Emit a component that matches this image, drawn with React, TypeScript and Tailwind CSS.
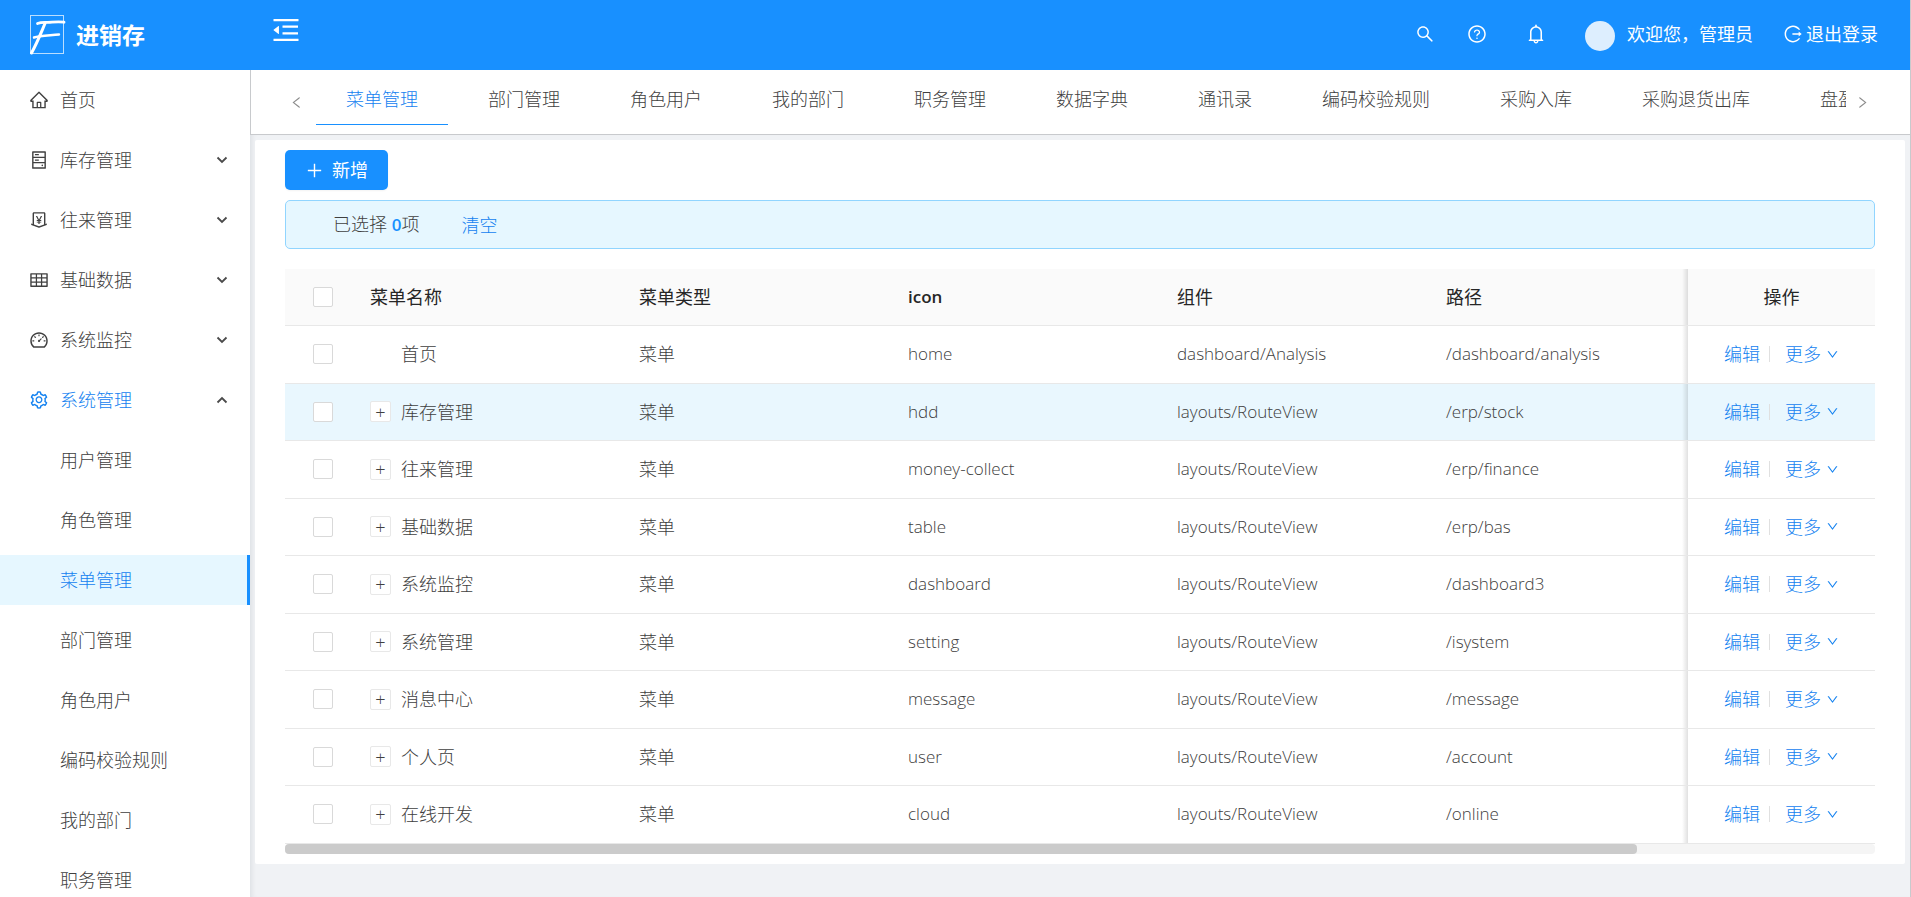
import { useState } from 'react';
import type { IconType } from 'react-icons';
import {
  AiOutlineBell,
  AiOutlineDashboard,
  AiOutlineDown,
  AiOutlineHdd,
  AiOutlineHome,
  AiOutlineLeft,
  AiOutlineLogout,
  AiOutlineMenuFold,
  AiOutlineMoneyCollect,
  AiOutlinePlus,
  AiOutlineQuestionCircle,
  AiOutlineRight,
  AiOutlineSearch,
  AiOutlineSetting,
  AiOutlineTable,
} from 'react-icons/ai';
import clsx from 'clsx';

interface MenuGroup {
  title: string;
  icon: IconType;
  expandable?: boolean;
  open?: boolean;
  children?: string[];
}

interface MenuRow {
  name: string;
  icon: string;
  component: string;
  path: string;
  leaf?: boolean;
}

const menuGroups: MenuGroup[] = [
  { title: '首页', icon: AiOutlineHome },
  { title: '库存管理', icon: AiOutlineHdd, expandable: true },
  { title: '往来管理', icon: AiOutlineMoneyCollect, expandable: true },
  { title: '基础数据', icon: AiOutlineTable, expandable: true },
  { title: '系统监控', icon: AiOutlineDashboard, expandable: true },
  {
    title: '系统管理',
    icon: AiOutlineSetting,
    expandable: true,
    open: true,
    children: ['用户管理', '角色管理', '菜单管理', '部门管理', '角色用户', '编码校验规则', '我的部门', '职务管理'],
  },
];

const tabs = [
  '菜单管理',
  '部门管理',
  '角色用户',
  '我的部门',
  '职务管理',
  '数据字典',
  '通讯录',
  '编码校验规则',
  '采购入库',
  '采购退货出库',
  '盘盈入库',
];

const rows: MenuRow[] = [
  { name: '首页', icon: 'home', component: 'dashboard/Analysis', path: '/dashboard/analysis', leaf: true },
  { name: '库存管理', icon: 'hdd', component: 'layouts/RouteView', path: '/erp/stock' },
  { name: '往来管理', icon: 'money-collect', component: 'layouts/RouteView', path: '/erp/finance' },
  { name: '基础数据', icon: 'table', component: 'layouts/RouteView', path: '/erp/bas' },
  { name: '系统监控', icon: 'dashboard', component: 'layouts/RouteView', path: '/dashboard3' },
  { name: '系统管理', icon: 'setting', component: 'layouts/RouteView', path: '/isystem' },
  { name: '消息中心', icon: 'message', component: 'layouts/RouteView', path: '/message' },
  { name: '个人页', icon: 'user', component: 'layouts/RouteView', path: '/account' },
  { name: '在线开发', icon: 'cloud', component: 'layouts/RouteView', path: '/online' },
];

// left-hand shadow of the fixed column
const fixedShadow =
  'relative before:absolute before:inset-y-0 before:-left-1.5 before:w-1.5 before:bg-linear-to-l before:from-black/12 before:to-transparent';

function Logo() {
  return (
    <svg width="36" height="40" viewBox="0 0 36 40" fill="none" stroke="white" aria-hidden="true">
      <rect x="0.5" y="0.5" width="33" height="38" strokeOpacity="0.7" />
      <path d="M7.5 8.5 C12 6.5 16 7.8 22 7.2 S30 6.6 34 7.2" strokeWidth="2.8" strokeLinecap="round" />
      <path d="M15 8.5 C10.5 19 7 28 1.5 38" strokeWidth="3" strokeLinecap="round" />
      <path d="M4 22.5 C10 20.5 20 20.5 29 19.5" strokeWidth="2.4" strokeLinecap="round" />
    </svg>
  );
}

function Chevron({ up }: { up?: boolean }) {
  return (
    <svg width="12" height="8" viewBox="0 0 12 8" fill="none" stroke="currentColor" strokeWidth="1.8" aria-hidden="true">
      <path d={up ? 'M1.5 6.5 L6 2 L10.5 6.5' : 'M1.5 1.5 L6 6 L10.5 1.5'} />
    </svg>
  );
}

function TopBar() {
  return (
    <header className="flex h-[70px] shrink-0 items-center bg-[#1890ff] font-normal text-white">
      <div className="flex w-[250px] shrink-0 items-center gap-2.5 pl-[30px]">
        <Logo />
        <h1 className="text-[23px] font-bold">进销存</h1>
      </div>
      <button type="button" aria-label="收起菜单" className="mb-2.5 ml-5 text-[32px]">
        <AiOutlineMenuFold />
      </button>
      <div className="ml-auto flex items-center pr-8 pb-0.5">
        <button type="button" aria-label="搜索" className="px-4 text-[20px]">
          <AiOutlineSearch />
        </button>
        <button type="button" aria-label="帮助" className="pr-5 pl-4 text-[20px]">
          <AiOutlineQuestionCircle />
        </button>
        <button type="button" aria-label="通知" className="pr-[38px] pl-[18px] text-[22px]">
          <AiOutlineBell />
        </button>
        <span className="mt-1 mr-3 size-[30px] rounded-full bg-[#ddeefe]" />
        <span className="mr-[30px]">欢迎您，管理员</span>
        <a href="#logout" className="flex items-center gap-[3px]">
          <AiOutlineLogout className="text-[20px]" />
          退出登录
        </a>
      </div>
    </header>
  );
}

function SideMenu() {
  const [selected, setSelected] = useState('菜单管理');

  return (
    <nav className="flex w-[250px] shrink-0 flex-col gap-2.5 overflow-hidden bg-white pt-[5px]">
      {menuGroups.map((group) => (
        <div key={group.title} className="flex shrink-0 flex-col gap-2.5">
          <button
            type="button"
            className={clsx('flex h-[50px] items-center gap-[11px] pr-[22px] pl-[29px]', group.open && 'text-[#1482f0]')}
          >
            <group.icon className="text-[20px]" />
            {group.title}
            {group.expandable && (
              <span className="ml-auto text-[#4a4a4a]">
                <Chevron up={group.open} />
              </span>
            )}
          </button>
          {group.children?.map((child) => (
            <button
              key={child}
              type="button"
              onClick={() => setSelected(child)}
              className={clsx(
                'h-[50px] border-r-[3px] pl-[60px] text-left',
                child === selected ? 'border-[#1890ff] bg-[#e6f7ff] text-[#1482f0]' : 'border-transparent'
              )}
            >
              {child}
            </button>
          ))}
        </div>
      ))}
    </nav>
  );
}

function PageTabs() {
  const [active, setActive] = useState('菜单管理');

  return (
    <div className="flex h-[65px] shrink-0 items-start border-b border-l border-[#c8cacd] bg-white pr-[31px]">
      <button type="button" aria-label="向左" className="flex h-[64px] w-[65px] items-center justify-end pr-3 text-[15px] text-[#8c8c8c]">
        <AiOutlineLeft />
      </button>
      <div className="flex min-w-0 flex-1 gap-2.5 overflow-hidden">
        {tabs.map((tab) => (
          <button
            key={tab}
            type="button"
            onClick={() => setActive(tab)}
            className={clsx(
              'h-[55px] shrink-0 border-b px-[30px] pt-1',
              tab === active ? 'border-[#1890ff] text-[#1482f0]' : 'border-transparent'
            )}
          >
            {tab}
          </button>
        ))}
      </div>
      <button type="button" aria-label="向右" className="flex h-[64px] w-[33px] items-center justify-center text-[15px] text-[#8c8c8c]">
        <AiOutlineRight />
      </button>
    </div>
  );
}

function Checkbox({ label }: { label: string }) {
  return (
    <input
      type="checkbox"
      aria-label={label}
      className="block size-5 appearance-none rounded-xs border border-[#d9d9d9] bg-white checked:bg-[#1890ff]"
    />
  );
}

function MenuTable() {
  return (
    <div>
      <table className="w-full table-fixed text-left">
        <thead>
          <tr className="h-[56px] border-b border-[#e8e8e8] bg-[#fafafa] text-[#262626]">
            <th className="w-[65px] pl-7">
              <Checkbox label="全选" />
            </th>
            <th className="w-[269px] px-5 font-normal">菜单名称</th>
            <th className="w-[269px] px-5 font-normal">菜单类型</th>
            <th className="w-[269px] px-5 text-[17px] font-semibold">icon</th>
            <th className="w-[269px] px-5 font-normal">组件</th>
            <th className="px-5 font-normal">路径</th>
            <th className={clsx('w-[187px] text-center font-normal', fixedShadow)}>操作</th>
          </tr>
        </thead>
        <tbody>
          {rows.map((row, index) => (
            <tr
              key={row.name}
              className={clsx('border-b border-[#e8e8e8] odd:h-[58px] even:h-[57px]', index === 1 && 'bg-[#e9f7fe]')}
            >
              <td className="pl-7">
                <Checkbox label={row.name} />
              </td>
              <td className="px-5">
                <div className="flex items-center gap-2.5">
                  {row.leaf ? (
                    <span className="w-[21px]" />
                  ) : (
                    <button
                      type="button"
                      aria-label="展开"
                      className="flex size-[21px] items-center justify-center rounded-xs border border-[#e8e8e8] bg-white leading-none"
                    >
                      +
                    </button>
                  )}
                  {row.name}
                </div>
              </td>
              <td className="px-5">菜单</td>
              <td className="px-5 text-[17px]">{row.icon}</td>
              <td className="px-5 text-[17px]">{row.component}</td>
              <td className="px-5 text-[17px]">{row.path}</td>
              <td className={fixedShadow}>
                <div className="flex items-center justify-center text-[#1482f0]">
                  <a href="#edit">编辑</a>
                  <span className="mr-[15px] ml-[9px] h-4 w-px bg-[#e0e0e0]" />
                  <button type="button" className="flex items-center gap-[5px]">
                    更多
                    <AiOutlineDown className="text-[13px]" />
                  </button>
                </div>
              </td>
            </tr>
          ))}
        </tbody>
      </table>
      <div className="h-2.5 rounded-sm bg-[#f5f5f5]">
        <div className="h-full w-[85%] rounded-sm bg-[#cbcbcb]" />
      </div>
    </div>
  );
}

export default function App() {
  return (
    <div className="flex h-screen flex-col overflow-hidden border-r border-[#c8cacd] bg-[#f0f2f5] font-['Open_Sans','Noto_Sans_CJK_SC',sans-serif] text-[18px] leading-6 font-light text-[#404040]">
      <TopBar />
      <div className="flex min-h-0 flex-1">
        <SideMenu />
        <div className="flex min-w-0 flex-1 flex-col">
          <PageTabs />
          <main className="flex-1 px-[5px] pt-[5px] shadow-[inset_5px_0_5px_-3px_rgba(0,21,41,0.08)]">
            <section className="rounded-xs bg-white px-[30px] py-2.5">
              <button
                type="button"
                className="flex h-10 items-center gap-2 rounded-[5px] bg-[#1890ff] px-5 font-normal text-white shadow-xs"
              >
                <AiOutlinePlus className="text-[19px]" />
                新增
              </button>
              <div className="mt-2.5 mb-5 flex h-[49px] items-center rounded-[5px] border border-[#91d5ff] bg-[#e6f7ff] pl-[47px]">
                <span>
                  已选择 <b className="text-[17px] font-semibold text-[#1890ff]">0</b>项
                </span>
                <button type="button" className="ml-[42px] text-[#1482f0]">
                  清空
                </button>
              </div>
              <MenuTable />
            </section>
          </main>
        </div>
      </div>
    </div>
  );
}
